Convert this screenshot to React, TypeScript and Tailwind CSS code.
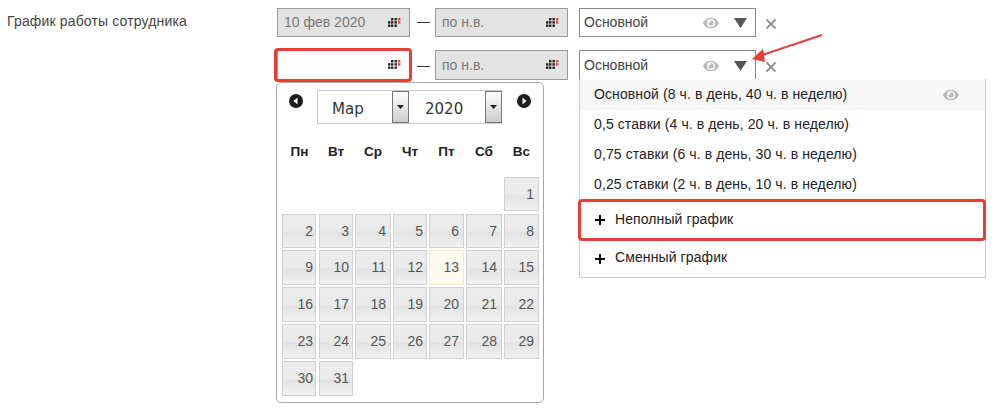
import React from 'react';
import { FaEye } from 'react-icons/fa';

const days = Array.from({ length: 31 }, (_, i) => i + 1);
const weekdays = ['Пн', 'Вт', 'Ср', 'Чт', 'Пт', 'Сб', 'Вс'];
const columnPadding = ['pr-[2px] mr-px', 'pr-[3px]', 'pr-[4px]', 'pr-[3px]', 'pr-[4px]', 'pr-[4px]', 'pr-[4px]'];
const options = [
  'Основной (8 ч. в день, 40 ч. в неделю)',
  '0,5 ставки (4 ч. в день, 20 ч. в неделю)',
  '0,75 ставки (6 ч. в день, 30 ч. в неделю)',
  '0,25 ставки (2 ч. в день, 10 ч. в неделю)',
];

const CalendarIcon = () => (
  <svg width="13" height="9" viewBox="0 0 13 9" className="absolute right-[8px] top-[9px]">
    <g fill="#222">
      <rect x="3" y="0" width="2.4" height="2.4" />
      <rect x="6.5" y="0" width="2.4" height="2.4" />
      <rect x="0" y="3.2" width="2.4" height="2.4" />
      <rect x="3" y="3.2" width="2.4" height="2.4" />
      <rect x="6.5" y="3.2" width="2.4" height="2.4" />
      <rect x="0" y="6.5" width="2.4" height="2.4" />
      <rect x="3" y="6.5" width="2.4" height="2.4" />
      <rect x="6.5" y="6.5" width="2.4" height="2.4" />
    </g>
    <g fill="#e8404c">
      <rect x="10" y="0" width="2.4" height="2.4" />
      <rect x="10" y="3.2" width="2.4" height="2.4" />
    </g>
  </svg>
);

const DateInput = ({ value, empty, tall }: { value?: string; empty?: boolean; tall?: boolean }) => (
  <div
    className={`relative w-[133px] border border-[#999] pl-[6px] text-[14px] text-[#777] ${
      tall ? 'h-[30px] leading-[29px]' : 'h-[29px] leading-[27px]'
    } ${empty ? 'bg-white' : 'bg-[#e3e3e3]'}`}
  >
    {value}
    <CalendarIcon />
  </div>
);

const ScheduleSelect = ({ tall }: { tall?: boolean }) => (
  <div
    className={`flex w-[177px] items-center border border-[#888] bg-white pl-[4px] text-[14px] text-[#444] ${
      tall ? 'h-[30px] pt-px' : 'h-[29px]'
    }`}
  >
    <span>Основной</span>
    <FaEye className="ml-[55px] text-[#bbb]" size={16} />
    <svg width="13" height="10" viewBox="0 0 13 10" className="ml-[15px]">
      <polygon points="0,0 13,0 6.5,10" fill="#555" />
    </svg>
  </div>
);

const RemoveIcon = ({ tall }: { tall?: boolean }) => (
  <svg width="10" height="10" viewBox="0 0 10 10" className={`ml-[10px] ${tall ? 'mt-[12px]' : 'mt-[11px]'}`}>
    <path d="M0.5 0.5L9.5 9.5M9.5 0.5L0.5 9.5" stroke="#888" strokeWidth="1.8" />
  </svg>
);

const NavButton = ({ dir }: { dir: 'left' | 'right' }) => (
  <svg width="14" height="14" viewBox="0 0 14 14" className="mt-[4px]">
    <circle cx="7" cy="7" r="7" fill="#1c1c1c" />
    <polygon points={dir === 'left' ? '8.5,3.5 8.5,10.5 4.5,7' : '5.5,3.5 5.5,10.5 9.5,7'} fill="#fff" />
  </svg>
);

const PickerField = ({ label, width, inset }: { label: string; width: string; inset: string }) => (
  <div className={`flex h-full shrink-0 items-center justify-between ${width} ${inset}`}>
    <span className="pt-[5px] font-['DejaVu_Sans',sans-serif] text-[15px] text-[#333]">{label}</span>
    <span className="flex h-[32px] w-[17px] items-center justify-center border border-[#777] bg-gradient-to-b from-white to-[#ccc]">
      <svg width="7" height="4" viewBox="0 0 7 4">
        <polygon points="0,0 7,0 3.5,4" fill="#222" />
      </svg>
    </span>
  </div>
);

const Calendar = () => (
  <div className="absolute left-[-1px] top-[32px] z-10 h-[321px] w-[268px] rounded-[5px] border border-[#aaa] bg-white px-[5px] pt-[7px]">
    <div className="flex h-[35px]">
      <span className="ml-[7px] mr-[14px]">
        <NavButton dir="left" />
      </span>
      <div className="flex h-[34px] w-[185px] items-center border border-[#ccc]">
        <PickerField label="Мар" width="w-[91px]" inset="pl-[14px]" />
        <PickerField label="2020" width="w-[93px]" inset="pl-[16px]" />
      </div>
      <span className="ml-[15px]">
        <NavButton dir="right" />
      </span>
    </div>
    <div className="mt-[18px] grid h-[18px] grid-cols-[35px_34px_36px_34px_35px_36px_35px] gap-x-[2px]">
      {weekdays.map((d) => (
        <span key={d} className="text-center text-[13.5px] font-bold leading-[18px] text-[#222]">
          {d}
        </span>
      ))}
    </div>
    <div className="mt-[16px] grid grid-cols-[35px_34px_36px_34px_35px_36px_35px] grid-rows-[35px_34px_35px_35px_35px_35px] gap-x-[2px] gap-y-[2px]">
      <div className="col-span-6" />
      {days.map((n) => (
        <div
          key={n}
          className={`text-right text-[14px] leading-[32px] text-[#555] ${n === 1 ? 'mb-px' : ''} ${
            columnPadding[(n + 5) % 7]
          } ${
            n === 13
              ? 'border border-[#f7ecb0] bg-[#fdfaf0]'
              : 'border border-[#d0d0d0] bg-[linear-gradient(#ededed_0%,#eaeaea_50%,#e3e3e3_56%,#f1f1f1_100%)]'
          }`}
        >
          {n}
        </div>
      ))}
    </div>
  </div>
);

function PlusIcon() {
  return (
    <svg width="10" height="10" viewBox="0 0 10 10" className="mr-[10px] mt-[2px]">
      <path d="M5 0V10M0 5H10" stroke="#111" strokeWidth="2" />
    </svg>
  );
}

const ScheduleMenu = () => (
  <div className="absolute left-0 top-[29px] z-10 w-[407px] border border-[#ccc] border-t-0 bg-white pt-px text-[14px] tracking-[0.1px] text-[#222]">
    {options.map((o, i) => (
      <div key={o} className={`flex h-[30px] items-center pb-px pl-[14px] ${i === 0 ? 'bg-[#f7f7f7]' : ''}`}>
        <span>{o}</span>
        {i === 0 && <FaEye className="ml-[96px] text-[#bbb]" size={16} />}
      </div>
    ))}
    <div className="relative flex h-[40px] items-center pb-[2px] pl-[15px]">
      <PlusIcon />
      <span>Неполный график</span>
      <div className="absolute inset-y-[-1px] left-[-2px] right-[-1px] rounded-[4px] border-[3px] border-[#e53f35]" />
    </div>
    <div className="flex h-[37px] items-center pb-[2px] pl-[15px]">
      <PlusIcon />
      <span>Сменный график</span>
    </div>
  </div>
);

const Dash = ({ tall }: { tall?: boolean }) => (
  <span className={`ml-[7px] mr-[5px] h-px w-[13px] bg-[#333] ${tall ? 'mt-[16px]' : 'mt-[14px]'}`} />
);

export default function App() {
  return (
    <div className="relative flex h-[414px] w-[995px] overflow-hidden bg-white pt-[8px] font-['Liberation_Sans',Arial,sans-serif]">
      <div className="w-[277px] pl-[7px] pt-[3px] text-[14px] tracking-[0.15px] text-[#444]">
        График работы сотрудника
      </div>

      <div className="flex flex-col gap-[13px]">
        <div className="flex">
          <DateInput value="10 фев 2020" />
          <Dash />
          <DateInput value="по н.в." />
          <div className="ml-[11px]">
            <ScheduleSelect />
          </div>
          <RemoveIcon />
        </div>

        <div className="flex">
          <div className="relative">
            <DateInput empty tall />
            <div className="absolute bottom-[-2px] left-[-3px] right-[-2px] top-[-2px] z-20 rounded-[4px] border-[3px] border-[#e53f35]" />
            <Calendar />
          </div>
          <Dash tall />
          <DateInput value="по н.в." tall />
          <div className="relative ml-[11px]">
            <ScheduleSelect tall />
            <ScheduleMenu />
          </div>
          <RemoveIcon tall />
        </div>
      </div>

      {/* annotation arrow */}
      <svg width="80" height="36" viewBox="0 0 80 36" className="absolute left-[748px] top-[30px] z-20">
        <path d="M74 5L14 25" stroke="#e53f35" strokeWidth="2" />
        <polygon points="4,29 15,19 17,32" fill="#e53f35" />
      </svg>
    </div>
  );
}
